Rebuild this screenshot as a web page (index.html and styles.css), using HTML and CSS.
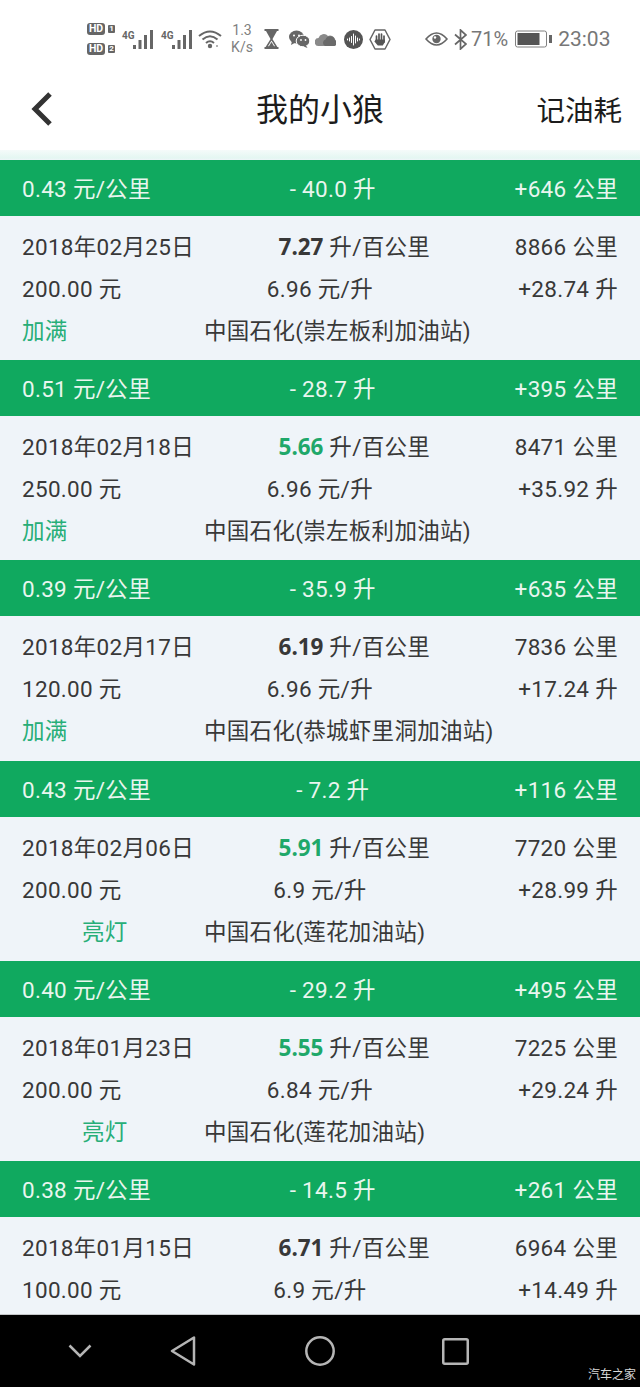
FILE: index.html
```html
<!DOCTYPE html>
<html lang="zh-CN">
<head>
<meta charset="utf-8">
<title>我的小狼</title>
<link rel="stylesheet" href="styles.css">
</head>
<body>
<div class="page">
  <div class="status">
    <div class="hd-stack">
      <div class="hd-line"><span class="hd">HD</span><span class="sim">1</span></div>
      <div class="hd-line"><span class="hd">HD</span><span class="sim">2</span></div>
    </div>
    <div class="signal sig-a"><span class="net">4G</span>
      <svg width="21" height="19" viewBox="0 0 21 19"><g fill="#666"><rect x="0" y="15" width="3" height="4"/><rect x="5.500" y="10" width="3" height="9"/><rect x="11" y="5" width="3" height="14"/><rect x="17" y="0" width="3" height="19"/></g></svg>
    </div>
    <div class="signal sig-b"><span class="net">4G</span>
      <svg width="21" height="19" viewBox="0 0 21 19"><g fill="#666"><rect x="0" y="15" width="3" height="4"/><rect x="5.500" y="10" width="3" height="9"/><rect x="11" y="5" width="3" height="14"/><rect x="17" y="0" width="3" height="19"/></g></svg>
    </div>
    <svg class="ic wifi" width="24" height="20" viewBox="0 0 24 20"><g fill="none" stroke="#666" stroke-width="2"><path d="M1 7Q12 -2 23 7"/><path d="M4.500 10.500Q12 4 19.500 10.500"/><path d="M8 14Q12 10.500 16 14"/></g><circle cx="12" cy="17" r="2.200" fill="#666"/><circle cx="19" cy="17" r="1" fill="#999"/></svg>
    <div class="speed"><span>1.3</span><span>K/s</span></div>
    <svg class="ic glass" width="15" height="20" viewBox="0 0 15 20"><g fill="#666"><rect x="0.500" y="0" width="14" height="2"/><rect x="0.500" y="18" width="14" height="2"/><path d="M2 2H13L8.500 10H6.500Z"/></g><path d="M7.500 10L2.500 18H12.500Z" fill="none" stroke="#666" stroke-width="1.500"/><path d="M7.500 13L4.500 18H10.500Z" fill="#666"/></svg>
    <svg class="ic chat" width="21" height="18" viewBox="0 0 21 18"><ellipse cx="7.500" cy="7" rx="7.500" ry="6.500" fill="#666"/><path d="M3 11L2 15L6.500 12.500Z" fill="#666"/><ellipse cx="14" cy="11" rx="6.800" ry="5.800" fill="#666" stroke="#fff" stroke-width="1"/><path d="M17 15.500L18.500 18L14.500 16.500Z" fill="#666"/><g fill="#fff"><circle cx="5" cy="5.500" r="1"/><circle cx="10" cy="5.500" r="1"/><circle cx="12" cy="10" r="0.900"/><circle cx="16.500" cy="10" r="0.900"/></g></svg>
    <svg class="ic cloud" width="21" height="14" viewBox="0 0 21 14"><path d="M4 14A4 4 0 0 1 3.500 6A5.500 5.500 0 0 1 13 4A4.500 4.500 0 0 1 17 14Z" fill="#8a8a8a"/><path d="M10 14A3.500 3.500 0 0 1 10.500 7.500A5 5 0 0 1 20 8A3.200 3.200 0 0 1 18 14Z" fill="#6a6a6a"/></svg>
    <svg class="ic sound" width="19" height="19" viewBox="0 0 19 19"><circle cx="9.500" cy="9.500" r="9.500" fill="#555"/><g stroke="#fff" stroke-width="1" stroke-linecap="round"><path d="M3.500 9V10"/><path d="M5.500 8V11"/><path d="M7.500 6.500V12.500"/><path d="M9.500 4V15"/><path d="M11.500 6V13"/><path d="M13.500 8V11"/><path d="M15.500 9V10"/></g></svg>
    <svg class="ic hand" width="22" height="21" viewBox="0 0 22 21"><path d="M6 1H16L21 10.500L16 20H6L1 10.500Z" fill="none" stroke="#666" stroke-width="1.500" stroke-linejoin="round"/><g stroke="#555" stroke-width="1.700" stroke-linecap="round"><path d="M7.500 7V12"/><path d="M10 5V12"/><path d="M12.500 5V12"/><path d="M15 7V13"/></g><path d="M6.700 10.500H15.900V13L13.800 16.500H8.800L5.400 12.500Z" fill="#555"/></svg>
    <svg class="ic eye" width="23" height="16" viewBox="0 0 23 16"><path d="M1 8Q11.500 -4 22 8Q11.500 20 1 8Z" fill="none" stroke="#666" stroke-width="1.600"/><circle cx="11.500" cy="8" r="4.200" fill="#666"/><circle cx="10" cy="6.500" r="1.200" fill="#fff"/></svg>
    <svg class="ic bt" width="13" height="21" viewBox="0 0 13 21"><path d="M1 5.500L12 15L6.500 20V1L12 6L1 15.500" fill="none" stroke="#666" stroke-width="1.700"/></svg>
    <span class="pct">71%</span>
    <svg class="ic batt" width="37" height="18" viewBox="0 0 37 18"><rect x="0.500" y="1" width="31" height="16" rx="2" fill="none" stroke="#808080" stroke-width="1"/><rect x="2.500" y="3" width="22" height="12" fill="#555"/><rect x="34" y="5" width="3" height="8" fill="#666"/></svg>
    <span class="clock">23:03</span>
  </div>

  <div class="appbar">
    <svg class="back" width="24" height="36" viewBox="0 0 24 36"><path d="M20 3L5 18L20 33" fill="none" stroke="#333" stroke-width="5"/></svg>
    <div class="title">我的小狼</div>
    <div class="action">记油耗</div>
  </div>

  <div class="list">
    <section class="entry">
      <div class="band"><span>0.43 元/公里</span><span>- 40.0 升</span><span>+646 公里</span></div>
      <div class="body">
        <div class="line"><span>2018年02月25日</span><span><b>7.27</b> 升/百公里</span><span>8866 公里</span></div>
        <div class="line"><span>200.00 元</span><span>6.96 元/升</span><span>+28.74 升</span></div>
        <div class="line3"><span class="tag">加满</span><span>中国石化(崇左板利加油站)</span></div>
      </div>
    </section>
    <section class="entry">
      <div class="band"><span>0.51 元/公里</span><span>- 28.7 升</span><span>+395 公里</span></div>
      <div class="body">
        <div class="line"><span>2018年02月18日</span><span><b class="good">5.66</b> 升/百公里</span><span>8471 公里</span></div>
        <div class="line"><span>250.00 元</span><span>6.96 元/升</span><span>+35.92 升</span></div>
        <div class="line3"><span class="tag">加满</span><span>中国石化(崇左板利加油站)</span></div>
      </div>
    </section>
    <section class="entry">
      <div class="band"><span>0.39 元/公里</span><span>- 35.9 升</span><span>+635 公里</span></div>
      <div class="body">
        <div class="line"><span>2018年02月17日</span><span><b>6.19</b> 升/百公里</span><span>7836 公里</span></div>
        <div class="line"><span>120.00 元</span><span>6.96 元/升</span><span>+17.24 升</span></div>
        <div class="line3"><span class="tag">加满</span><span>中国石化(恭城虾里洞加油站)</span></div>
      </div>
    </section>
    <section class="entry">
      <div class="band"><span>0.43 元/公里</span><span>- 7.2 升</span><span>+116 公里</span></div>
      <div class="body">
        <div class="line"><span>2018年02月06日</span><span><b class="good">5.91</b> 升/百公里</span><span>7720 公里</span></div>
        <div class="line"><span>200.00 元</span><span>6.9 元/升</span><span>+28.99 升</span></div>
        <div class="line3"><span class="tag tag-light">亮灯</span><span>中国石化(莲花加油站)</span></div>
      </div>
    </section>
    <section class="entry">
      <div class="band"><span>0.40 元/公里</span><span>- 29.2 升</span><span>+495 公里</span></div>
      <div class="body">
        <div class="line"><span>2018年01月23日</span><span><b class="good">5.55</b> 升/百公里</span><span>7225 公里</span></div>
        <div class="line"><span>200.00 元</span><span>6.84 元/升</span><span>+29.24 升</span></div>
        <div class="line3"><span class="tag tag-light">亮灯</span><span>中国石化(莲花加油站)</span></div>
      </div>
    </section>
    <section class="entry">
      <div class="band"><span>0.38 元/公里</span><span>- 14.5 升</span><span>+261 公里</span></div>
      <div class="body">
        <div class="line"><span>2018年01月15日</span><span><b>6.71</b> 升/百公里</span><span>6964 公里</span></div>
        <div class="line"><span>100.00 元</span><span>6.9 元/升</span><span>+14.49 升</span></div>
      </div>
    </section>
  </div>

  <div class="navbar">
    <svg class="nav-ic nav-down" width="24" height="14" viewBox="0 0 24 14"><path d="M1.500 1.500L12 12L22.500 1.500" fill="none" stroke="#b5b5b5" stroke-width="2.500"/></svg>
    <svg class="nav-ic nav-back" width="26" height="30" viewBox="0 0 26 30"><path d="M24 1.500V28.500L2 15Z" fill="none" stroke="#b5b5b5" stroke-width="2.500" stroke-linejoin="round"/></svg>
    <svg class="nav-ic nav-home" width="30" height="30" viewBox="0 0 30 30"><circle cx="15" cy="15" r="13.700" fill="none" stroke="#b5b5b5" stroke-width="2.500"/></svg>
    <svg class="nav-ic nav-recent" width="27" height="27" viewBox="0 0 27 27"><rect x="1.250" y="1.250" width="24.500" height="24.500" rx="1.500" fill="none" stroke="#b5b5b5" stroke-width="2.500"/></svg>
    <span class="mark">汽车之家</span>
  </div>
</div>
</body>
</html>
```
FILE: styles.css
```css
* { box-sizing: border-box; }
html, body { margin: 0; padding: 0; }
body { font-family: Roboto, "Noto Sans CJK SC", sans-serif; background: #fff; }
.page { width: 640px; height: 1387px; display: flex; flex-direction: column; overflow: hidden; background: #fff; }

/* status bar */
.status { height: 70px; flex: none; display: flex; align-items: center; padding: 8px 0 0 87px; color: #666; }
.status > * { flex: none; }
.hd-stack { width: 30px; display: flex; flex-direction: column; gap: 8px; }
.hd-line { display: flex; align-items: center; gap: 3px; height: 12px; }
.hd { width: 18px; height: 12px; border-radius: 3px; background: #666; color: #fff; font-size: 10.500px; font-weight: 700; line-height: 12px; text-align: center; }
.sim { width: 7px; height: 8px; border-radius: 1px; background: #666; color: #fff; font-size: 8px; font-weight: 700; line-height: 8px; text-align: center; }
.signal { position: relative; width: 32px; height: 19px; display: flex; align-items: flex-end; justify-content: flex-end; }
.sig-a { margin-left: 5px; }
.sig-b { margin-left: 7px; }
.net { position: absolute; left: 0; top: 0; font-size: 10px; font-weight: 700; line-height: 11px; color: #666; }
.wifi { margin-left: 5px; }
.speed { width: 24px; margin-left: 8px; display: flex; flex-direction: column; align-items: center; font-size: 14px; line-height: 17px; color: #808080; }
.glass { margin-left: 10px; }
.chat { margin-left: 10px; }
.cloud { margin-left: 5px; }
.sound { margin-left: 8px; }
.hand { margin-left: 6px; }
.eye { margin-left: 34px; }
.bt { margin-left: 6px; }
.pct { margin-left: 4px; font-size: 20px; color: #777; }
.batt { margin-left: 7px; }
.clock { margin-left: 6px; font-size: 21px; color: #777; }

/* app bar */
.appbar { height: 80px; flex: none; display: grid; grid-template-columns: 1fr auto 1fr; align-items: center; padding: 0 18px 2px; background: #fff; }
.back { justify-self: start; margin-left: 12px; }
.title { margin-top: -4px; font-size: 32px; color: #1c1c1c; }
.action { justify-self: end; margin-top: -2px; font-size: 28.500px; color: #1c1c1c; }

/* list */
.list { flex: 1; min-height: 0; overflow: hidden; padding-top: 10px; background: linear-gradient(#f5fbfa 0, #e4f7f2 8px, #eff4f9 10px); letter-spacing: 0.300px; }
.band { height: 56px; display: flex; justify-content: space-between; align-items: center; padding: 0 22px 2px; background: #10a95f; color: #e9f6ef; font-size: 22.500px; }
.body { height: 144.200px; padding: 10px 22px 0; background: #eff4f9; color: #383838; font-size: 22.500px; }
.line { height: 42px; display: flex; justify-content: space-between; align-items: baseline; line-height: 42px; }
.line b { font-weight: 700; font-family: "Noto Sans", Roboto, sans-serif; letter-spacing: 0; }
.good { color: #1fa86a; }
.line3 { height: 42px; display: grid; grid-template-columns: 182px 1fr; align-items: baseline; line-height: 42px; }
.tag { color: #27ae78; }
.tag-light { padding-left: 60px; }

/* nav bar */
.navbar { position: relative; height: 73px; flex: none; display: flex; align-items: center; padding-left: 68px; background: #000; border-top: 1px solid #c4c6c8; }
.nav-back { margin-left: 78px; }
.nav-home { margin-left: 109px; }
.nav-recent { margin-left: 107px; }
.mark { position: absolute; right: 4px; bottom: 5px; font-size: 12px; line-height: 14px; color: #d8d8d8; }
```
